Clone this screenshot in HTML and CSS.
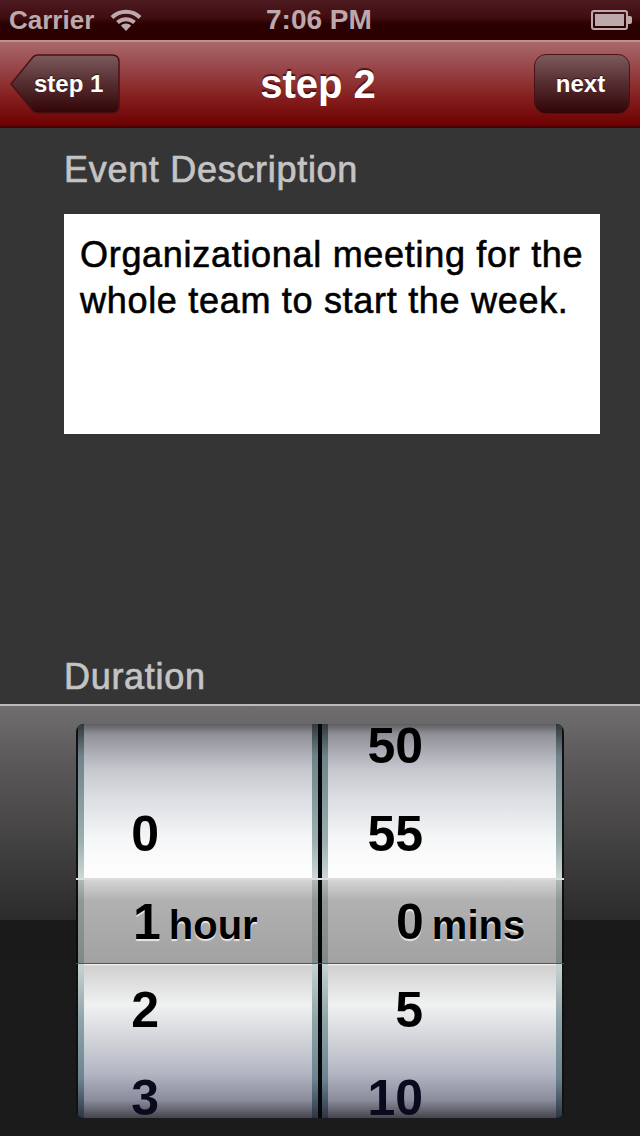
FILE: index.html
```html
<!DOCTYPE html>
<html>
<head>
	<meta name="viewport" content="width=device-width, initial-scale=1">
	<link rel="stylesheet" href="styles.css">
</head>
<body>
	<div class="screen">
		<div class="status-bar">
			<div class="status-left">
				<span>Carrier</span>
				<svg class="wifi" width="32" height="24" viewBox="0 0 32 24">
					<path d="M2 9.5 A20 20 0 0 1 30 9.5" fill="none" stroke="#bda9ab" stroke-width="4"/>
					<path d="M7.5 14.5 A12.5 12.5 0 0 1 24.5 14.5" fill="none" stroke="#bda9ab" stroke-width="4"/>
					<path d="M16 23 L10.8 17.6 A7.5 7.5 0 0 1 21.2 17.6 Z" fill="#bda9ab"/>
				</svg>
			</div>
			<span class="status-time">7:06 PM</span>
			<svg class="battery" width="42" height="20" viewBox="0 0 42 20">
				<rect x="1" y="1" width="35" height="18" rx="2" fill="none" stroke="#bda9ab" stroke-width="2"/>
				<rect x="4" y="4" width="29" height="12" fill="#bda9ab"/>
				<path d="M37 6 H39 Q41 6 41 8 V12 Q41 14 39 14 H37 Z" fill="#bda9ab"/>
			</svg>
		</div>

		<div class="nav-bar">
			<button class="nav-button back-button">
				<svg class="back-shape" width="110" height="60" viewBox="0 0 110 60">
					<defs>
						<linearGradient id="backFill" x1="0" y1="0" x2="0" y2="1">
							<stop offset="0" stop-color="#7c5a5b"/>
							<stop offset="0.45" stop-color="#583033"/>
							<stop offset="1" stop-color="#320406"/>
						</linearGradient>
					</defs>
					<path d="M1 30 L23 3 Q25 1 28 1 H102 Q109 1 109 8 V52 Q109 59 102 59 H28 Q25 59 23 57 Z" fill="url(#backFill)" stroke="#4a1216" stroke-width="1.5"/>
				</svg>
				<span class="back-label">step 1</span>
			</button>
			<h1 class="nav-title">step 2</h1>
			<button class="nav-button next-button">next</button>
		</div>

		<div class="content">
			<div class="field-label">Event Description</div>
			<div class="description">Organizational meeting for the whole team to start the week.</div>
			<div class="field-label duration-label">Duration</div>
		</div>

		<div class="picker">
			<div class="wheel-frame">
				<div class="strip"></div>
				<div class="wheel hours">
					<div class="wheel-row"></div>
					<div class="wheel-row">0</div>
					<div class="wheel-row"></div>
					<div class="wheel-row">2</div>
					<div class="wheel-row low">3</div>
				</div>
				<div class="strip"></div>
				<div class="gutter"></div>
				<div class="strip"></div>
				<div class="wheel mins">
					<div class="wheel-row">50</div>
					<div class="wheel-row">55</div>
					<div class="wheel-row"></div>
					<div class="wheel-row">5</div>
					<div class="wheel-row low">10</div>
				</div>
				<div class="strip"></div>

				<div class="selection">
					<div class="selection-cell hours"><span>1</span><span class="unit">hour</span></div>
					<div class="selection-cell mins"><span>0</span><span class="unit">mins</span></div>
				</div>
			</div>
		</div>
	</div>
</body>
</html>
```

FILE: styles.css
```css
body {
	margin: 0;
	background-color: #363536;
	font-family: "Liberation Sans", Arial, sans-serif;
}

.screen {
	display: flex;
	flex-direction: column;
	width: 640px;
	height: 1136px;
	overflow: hidden;
}

/* status bar */
.status-bar {
	display: flex;
	align-items: center;
	justify-content: space-between;
	position: relative;
	flex: 0 0 40px;
	box-sizing: border-box;
	padding: 0 7px 0 9px;
	background: linear-gradient(#4d1c20, #3f0c10 45%, #2b0000 60%, #2b0000);
	color: #bda9ab;
	font-size: 26px;
	font-weight: bold;
}

.status-left {
	display: flex;
	align-items: center;
	gap: 16px;
}

.status-time {
	position: absolute;
	left: 266px;
	font-size: 28px;
}

/* nav bar */
.nav-bar {
	display: flex;
	align-items: center;
	justify-content: space-between;
	position: relative;
	flex: 0 0 88px;
	box-sizing: border-box;
	padding: 0 10px;
	border-top: 2px solid #c08f8f;
	border-bottom: 2px solid #4a0000;
	background: linear-gradient(#a9686a, #98474a 30%, #85201f 65%, #6e0002);
}

.nav-title {
	position: absolute;
	left: 0;
	right: 4px;
	margin: 0;
	color: #fff;
	font-size: 40px;
	font-weight: bold;
	text-align: center;
	text-shadow: 0 -2px 1px rgba(50, 0, 0, 0.7);
}

.nav-button {
	padding: 0;
	border: none;
	background: none;
	color: #fff;
	font-family: inherit;
	font-size: 24px;
	font-weight: bold;
	text-shadow: 0 -1px 1px rgba(0, 0, 0, 0.6);
}

.back-button {
	position: relative;
	width: 110px;
	height: 60px;
}

.back-shape {
	position: absolute;
	left: 0;
	top: 0;
}

.back-label {
	position: relative;
	display: block;
	padding-left: 24px;
	text-align: left;
}

.next-button {
	width: 96px;
	height: 60px;
	padding-right: 3px;
	border: 1.5px solid #4a1216;
	border-radius: 12px;
	background: linear-gradient(#7c5a5b, #583033 45%, #320406);
}

/* form */
.content {
	display: flex;
	flex-direction: column;
	flex: 1;
	padding: 22px 40px 7px 64px;
}

.field-label {
	color: #c4c4c4;
	font-size: 36px;
	letter-spacing: 0.7px;
	line-height: 40px;
	-webkit-text-stroke: 0.7px #c4c4c4;
}

.description {
	height: 220px;
	box-sizing: border-box;
	margin-top: 24px;
	padding: 18px 16px;
	background-color: #fff;
	color: #000;
	font-size: 36px;
	letter-spacing: 0.7px;
	line-height: 46px;
	-webkit-text-stroke: 0.6px #000;
}

.duration-label {
	margin-top: auto;
}

/* picker */
.picker {
	flex: 0 0 432px;
	box-sizing: border-box;
	padding: 18px 76px;
	border-top: 2px solid #bbb;
	background: linear-gradient(#706e6f, #5c5a5b 12%, #2c2b2c 214px, #1a1a1a 214px, #1b1b1b);
}

.wheel-frame {
	display: flex;
	position: relative;
	height: 394px;
	box-sizing: border-box;
	padding: 0 3px 0 2px;
	border-radius: 8px;
	background-color: #111;
	overflow: hidden;
}

.strip {
	flex: 0 0 6px;
	background: linear-gradient(#30383c, #6e8288 8%, #9db1b1 30%, #cfdbd9 40%, #c9d6d5 60%, #8ea5a8 75%, #6b8491 90%, #2c3444);
}

.gutter {
	flex: 0 0 4px;
	background-color: #05070a;
}

.wheel {
	flex: 0 0 228px;
	margin-top: -22px;
	background: linear-gradient(transparent 22px, #5d5c60 22px, #8f8f96 32px, #a9a9b2 48px, #c6c8ce 68px, #dcdfe3 98px, #f6f7f8 138px, #fdfdfd 168px, #fdfdfd 262px, #d0d0d0 264px, #f0f1f1 303px, #d0d2d8 340px, #b4b7c4 370px, #8b8c9c 398px, #45454d 416px);
	color: #000;
	font-size: 50px;
	font-weight: bold;
	line-height: 40px;
}

.wheel-row {
	display: flex;
	align-items: center;
	justify-content: flex-end;
	height: 88px;
	box-sizing: border-box;
}

.wheel-row.low {
	color: #0a0a1e;
}

.hours .wheel-row {
	width: 75px;
}

.mins .wheel-row {
	width: 95px;
}

/* selection bar lies over the wheels */
.selection {
	display: flex;
	position: absolute;
	left: 0;
	right: 0;
	top: 154px;
	height: 86px;
	box-sizing: border-box;
	border-top: 2px solid #dcdcdc;
	border-bottom: 1px solid #555;
	background: linear-gradient(rgba(0, 0, 0, 0.16), rgba(0, 0, 0, 0.3) 25%, rgba(0, 0, 0, 0.36));
	color: #000;
	font-size: 50px;
	font-weight: bold;
	text-shadow: 0 2px 1px #e8e8e8;
}

.selection-cell {
	display: flex;
	align-items: baseline;
	padding-top: 13px;
}

.selection-cell.hours {
	width: 244px;
	padding-left: 57px;
	box-sizing: border-box;
}

.selection-cell.mins {
	padding-left: 76px;
}

.unit {
	margin-left: 8px;
	font-size: 40px;
}
```
